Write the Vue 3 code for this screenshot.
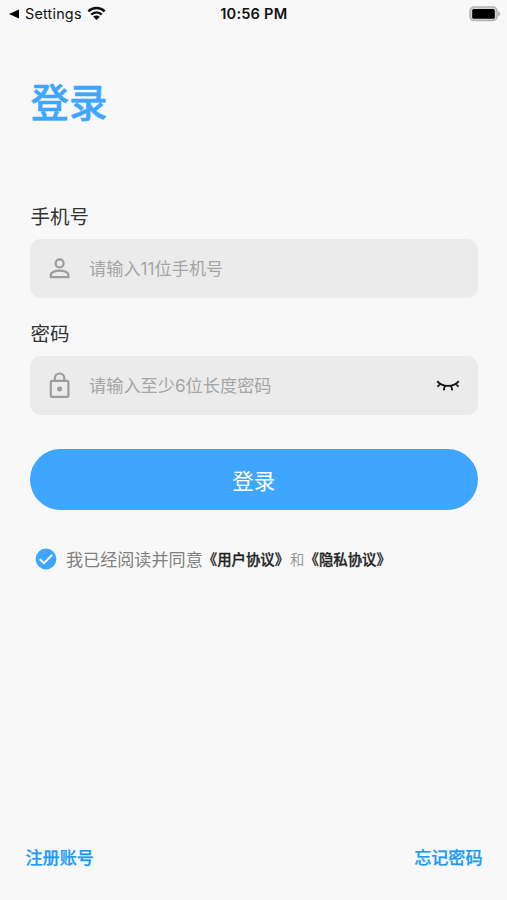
<script setup>
import { ref } from 'vue'

const phone = ref('')
const password = ref('')
const agreed = ref(true)
</script>

<template>
  <main class="screen">
    <header class="status">
      <div class="back">
        <svg class="caret" viewBox="0 0 10 10"><path d="M0 5 10 .6v8.8z" /></svg>
        <span>Settings</span>
        <svg class="wifi" viewBox="0 0 20 15">
          <path d="M1.4 5.2a12.2 12.2 0 0 1 17.2 0M4.5 8.6a7.8 7.8 0 0 1 11 0" fill="none" stroke="#111" stroke-width="2.6" />
          <path d="M6.6 11a4.8 4.8 0 0 1 6.8 0L10 14.4z" />
        </svg>
      </div>
      <time class="time">10:56 PM</time>
      <svg class="battery" viewBox="0 0 32 16">
        <rect x="1" y="1" width="27" height="13.6" rx="4" fill="#d4d4d4" stroke="#b4b4b4" stroke-width="1.5" />
        <rect x="3.2" y="3" width="22.6" height="9.8" rx="1.6" fill="#000" />
        <path d="M29.2 5.2c2.4 1.2 2.4 4 0 5.2z" fill="#adadad" />
      </svg>
    </header>

    <h1 class="title">登录</h1>

    <form class="form" @submit.prevent>
      <label class="label" for="phone">手机号</label>
      <div class="field">
        <svg class="icon" viewBox="0 0 25 25" fill="none" stroke="#9c9c9c" stroke-width="2.2">
          <circle cx="12.6" cy="7.4" r="4" />
          <path d="M3.8 21.1v-2.2c0-2.7 4.6-4.2 8.8-4.2s8.8 1.5 8.8 4.2v2.2z" />
        </svg>
        <input id="phone" v-model="phone" type="tel" placeholder="请输入11位手机号" />
      </div>

      <label class="label second" for="password">密码</label>
      <div class="field">
        <svg class="icon lock" viewBox="0 0 25 29" fill="none" stroke="#9c9c9c" stroke-width="2.2">
          <rect x="3.8" y="9.8" width="17.6" height="16" rx="1.4" />
          <path d="M7.9 9.8V7.2a4.7 4.7 0 0 1 9.4 0v2.6" />
          <circle cx="12.6" cy="18" r="2.5" fill="#9c9c9c" stroke="none" />
        </svg>
        <input id="password" v-model="password" type="password" placeholder="请输入至少6位长度密码" />
        <svg class="eye" viewBox="0 0 24 12" fill="none" stroke="#111" stroke-width="1.8">
          <path d="M1.3 1.1C6.2 7.5 17.8 7.5 22.7 1.1M4.4 3.8 1.4 6.7M8.8 5.6l-1 4.8M15.2 5.6l1 4.8M19.6 3.8l3 2.9" />
        </svg>
      </div>

      <button class="submit">登录</button>

      <div class="agreement" @click="agreed = !agreed">
        <svg class="check" viewBox="0 0 22 22">
          <circle cx="11" cy="11" r="10.4" fill="#3ea6ff" />
          <path v-if="agreed" d="m4.7 11.1 4.3 4.1 8.1-8.3" fill="none" stroke="#fff" stroke-width="2" />
        </svg>
        <span class="read">我已经阅读并同意</span>
        <b>《用户协议》</b><span class="and">和</span><b>《隐私协议》</b>
      </div>
    </form>

    <footer class="footer">
      <a>注册账号</a>
      <a>忘记密码</a>
    </footer>
  </main>
</template>

<style>
body { background: #f8f8f8; }
</style>

<style scoped>
.screen {
  box-sizing: border-box;
  width: 100%;
  height: 900px;
  display: flex;
  flex-direction: column;
  background: #f8f8f8;
  font-family: Inter, "Noto Sans CJK SC", sans-serif;
  color: #333;
}
.status {
  height: 28px;
  padding: 0 6px 0 9px;
  display: grid;
  grid-template-columns: 1fr auto 1fr;
  align-items: center;
  color: #111;
}
.back { display: flex; align-items: center; font-size: 14.4px; letter-spacing: .2px; line-height: 16px; }
.caret { width: 10px; height: 10px; margin-right: 6px; margin-top: -1px; }
.wifi { width: 19px; height: 15px; margin-left: 5.5px; margin-top: -2px; }
.time { font-size: 14.6px; font-weight: 600; letter-spacing: .2px; line-height: 16px; padding: 0 2.5px 0 0; }
.battery { width: 32px; height: 16px; justify-self: end; margin-top: -1px; }
.title {
  margin: 47px 0 0 30.5px;
  font-size: 38.5px;
  line-height: 56px;
  font-weight: 500;
  -webkit-text-stroke: .5px currentColor;
  color: #3ea6ff;
}
.form { padding: 0 29.5px 0 30px; margin-top: 72px; display: flex; flex-direction: column; }
.label { padding-left: .5px; font-size: 19.5px; line-height: 28px; }
.second { margin-top: 22.5px; }
.field {
  height: 59px;
  margin-top: 7.5px;
  padding: 0 18px 0 17px;
  box-sizing: border-box;
  display: flex;
  align-items: center;
  border-radius: 11px;
  background: #ebebeb;
}
.icon { width: 25px; height: 25px; flex: none; }
.lock { height: 29px; }
input {
  flex: 1;
  min-width: 0;
  padding: 0;
  margin-left: 17px;
  border: 0;
  outline: 0;
  background: none;
  font: inherit;
  font-size: 17.2px;
  color: #333;
}
input::placeholder { color: #a5a5a5; opacity: 1; }
.eye { width: 24px; height: 12px; margin-top: 2px; flex: none; }
.submit {
  height: 61px;
  margin: 34px 0 0;
  padding: 0;
  border: 0;
  border-radius: 31px;
  background: #3ea6ff;
  color: #fff;
  font: inherit;
  font-size: 21.5px;
}
.agreement { margin: 37px 0 0 5px; height: 24px; display: flex; align-items: center; font-size: 14.4px; line-height: 24px; white-space: nowrap; }
.check { width: 22px; height: 22px; margin-right: 9px; }
.agreement span, .agreement b { padding-top: 3px; }
.read { font-size: 17.1px; color: #808080; }
.agreement b { color: #222; font-weight: 500; -webkit-text-stroke: .3px currentColor; }
.agreement .and { padding-left: 1px; color: #999; }
.footer {
  margin-top: auto;
  padding: 0 24.5px 30px 25.5px;
  display: flex;
  justify-content: space-between;
  font-size: 17.1px;
  line-height: 24px;
  font-weight: 500;
  -webkit-text-stroke: .25px currentColor;
  color: #1b9bf5;
}
</style>
